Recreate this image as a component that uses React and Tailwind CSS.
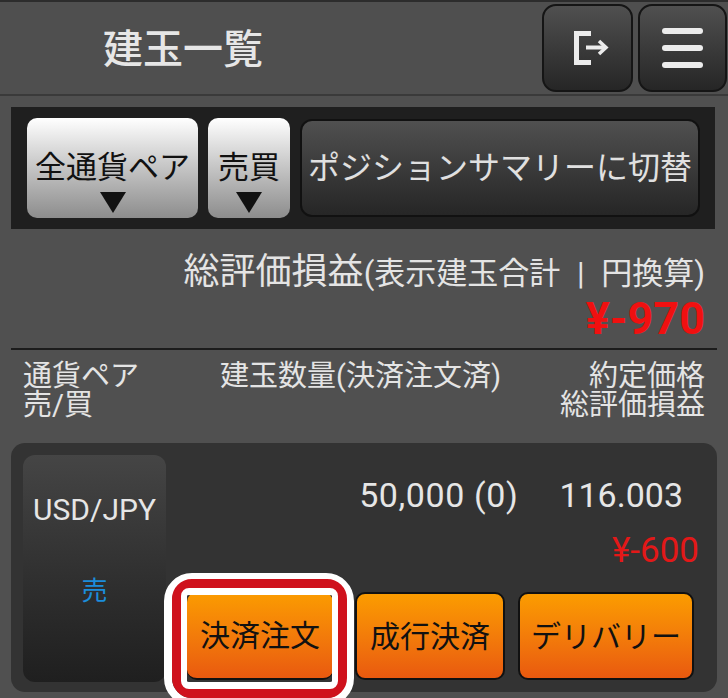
const font = { fontFamily: 'Roboto, "Noto Sans CJK JP", sans-serif' };

function Arrow() {
  return <span className="block h-0 w-0 border-x-[13px] border-t-[21px] border-x-transparent border-t-[#111]" />;
}

function FilterButton({ label, className }) {
  return (
    <button type="button" className={`flex h-[100px] shrink-0 flex-col items-center justify-end rounded-[10px] bg-gradient-to-b from-white to-[#8d8d8d] pb-[5px] text-[31px] leading-[36px] text-[#111] ${className}`}>
      <span className="mb-[6px] whitespace-nowrap">{label}</span>
      <Arrow />
    </button>
  );
}

function OrderButton({ label, className }) {
  return (
    <button type="button" className={`flex h-[88px] items-center justify-center rounded-[10px] border-2 border-[#111] bg-gradient-to-b from-[#fb9c00] to-[#e9590f] text-[30px] whitespace-nowrap text-[#111] ${className}`}>
      {label}
    </button>
  );
}

export default function App() {
  return (
    <div className="relative h-[698px] w-[728px] overflow-hidden bg-[#505050]" style={font}>
      <header className="flex h-[96px] items-center justify-between border-t-2 border-b-2 border-t-[#2c2c2c] border-b-[#3a3a3a] bg-[#4f4f4f] pr-px">
        <h1 className="mt-[4px] ml-[103px] text-[40px] font-medium text-[#e6e6e6]">建玉一覧</h1>
        <div className="flex gap-[5px]">
          <button type="button" className="grid h-[88px] w-[91px] place-items-center rounded-[14px] border-2 border-[#151515] bg-gradient-to-b from-[#505050] to-[#262626]">
            <svg className="ml-[8px]" width="36" height="34" viewBox="0 0 36 34" fill="none" stroke="#ececec">
              <path d="M17 2.5H2.5V31.5H17" strokeWidth="5" />
              <path d="M12 16.5H32" strokeWidth="4" />
              <path d="M25 10L32 16.5L25 23" strokeWidth="3.5" />
            </svg>
          </button>
          <button type="button" className="flex h-[88px] w-[89px] flex-col items-center justify-center gap-[11px] rounded-[14px] border-2 border-[#151515] bg-gradient-to-b from-[#505050] to-[#262626]">
            <span className="h-[6px] w-[41px] rounded-full bg-[#ececec]" />
            <span className="h-[6px] w-[41px] rounded-full bg-[#ececec]" />
            <span className="h-[6px] w-[41px] rounded-full bg-[#ececec]" />
          </button>
        </div>
      </header>

      <section className="mx-[11px] mt-[11px] flex h-[122px] w-[704px] items-center bg-[#1f1f1f] pl-[16px]">
        <FilterButton label="全通貨ペア" className="w-[171px]" />
        <FilterButton label="売買" className="ml-[10px] w-[82px]" />
        <button type="button" className="ml-[10px] h-[98px] w-[400px] rounded-[12px] border-2 border-[#111] bg-gradient-to-b from-[#505050] to-[#262626] text-[32px] whitespace-nowrap text-[#e0e0e0]">
          ポジションサマリーに切替
        </button>
      </section>

      <section className="mx-[11px] mt-[19px] w-[706px] border-b-2 border-[#1c1c1c] pr-[12px] pb-[6px] text-right">
        <p className="h-[46px] pt-[1px] text-[31px] leading-[46px] whitespace-nowrap text-[#e4e4e4]">
          <span className="text-[36px]">総評価損益</span>(表示建玉合計 <span className="mx-[9px]">|</span> 円換算)
        </p>
        <p className="h-[48px] pt-[1px] text-[45px] leading-[48px] font-bold text-[#f01010]">¥-970</p>
      </section>

      <section className="mx-[23px] mt-[12px] grid h-[58px] w-[682px] grid-cols-[197px_1fr_auto] text-[29px] leading-[29px] text-[#e4e4e4]">
        <p>通貨ペア<br />売/買</p>
        <p>建玉数量(決済注文済)</p>
        <p className="text-right">約定価格<br />総評価損益</p>
      </section>

      <section className="mx-[11px] mt-[23px] flex h-[249px] w-[706px] rounded-[14px] bg-[#333] pt-[12px] pl-[12px]">
        <div className="flex h-[227px] w-[143px] flex-col items-center rounded-[12px] bg-gradient-to-b from-[#454545] to-[#1f1f1f] pt-[35px]">
          <p className="text-[30px] leading-[40px] text-[#e6e6e6]">USD/JPY</p>
          <p className="mt-[41px] text-[26px] leading-[40px] text-[#1b8ddb]">売</p>
        </div>
        <div className="w-[551px]">
          <div className="flex h-[67px] items-center justify-end pt-[13px] pr-[34px] text-[34px] text-[#e6e6e6]">
            <span className="tracking-[0.6px]">50,000 (0)</span>
            <span className="ml-[41px]">116.003</span>
          </div>
          <p className="h-[70px] pt-[4px] pr-[18px] text-right text-[35px] leading-[50px] text-[#e31818]">¥-600</p>
          <div className="flex pl-[21px]">
            <OrderButton label="決済注文" className="w-[146px] border-x-0 border-t-0" />
            <OrderButton label="成行決済" className="ml-[22px] w-[150px]" />
            <OrderButton label="デリバリー" className="ml-[13px] w-[176px]" />
          </div>
        </div>
      </section>

      {/* callout round the first order button */}
      <div className="absolute top-[573px] left-[164px] h-[133px] w-[190px] rounded-[28px] border-[8px] border-white" />
      <div className="absolute top-[579px] left-[172px] h-[119px] w-[175px] rounded-[20px] border-[9px] border-[#cf111c]" />
      <div className="absolute top-[588px] left-[181px] h-[101px] w-[157px] rounded-[8px] border-x-[6px] border-t-[7px] border-b-[7px] border-white" />
    </div>
  );
}
